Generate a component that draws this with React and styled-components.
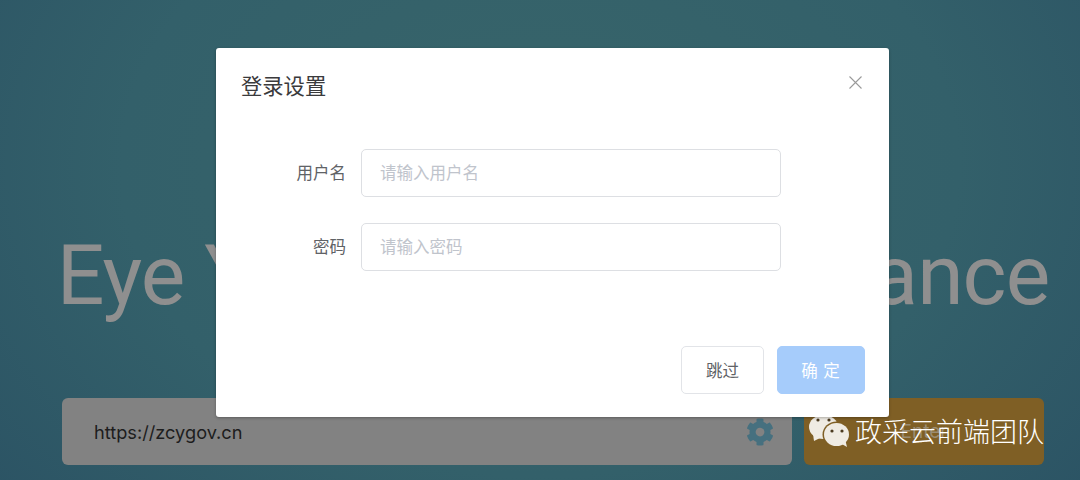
import styled, { createGlobalStyle } from 'styled-components';
import { FaCog } from 'react-icons/fa';

const cjk = '"Noto Sans CJK SC", "Liberation Sans", sans-serif';

const GlobalStyle = createGlobalStyle`
  html, body {
    margin: 0;
    padding: 0;
  }
  * {
    box-sizing: border-box;
  }
`;

const WeChatLogo = () => (
  <svg width="46" height="46" viewBox="0 0 46 46">
    <ellipse cx="16.5" cy="19" rx="14.5" ry="12" fill="#efebe3" />
    <path d="M6 26 L7 33 L15 29 Z" fill="#efebe3" />
    <circle cx="11" cy="12" r="1.6" fill="#4a3a20" />
    <circle cx="22" cy="12" r="1.6" fill="#4a3a20" />
    <ellipse cx="29.5" cy="26.5" rx="14" ry="13" fill="#7f5f25" />
    <ellipse cx="29.5" cy="26.5" rx="12.5" ry="11.5" fill="#efebe3" />
    <path d="M33 35 L40 39 L38 31 Z" fill="#efebe3" />
    <circle cx="25" cy="23" r="1.6" fill="#4a3a20" />
    <circle cx="35" cy="23" r="1.6" fill="#4a3a20" />
  </svg>
);

const App = () => {
  return (
    <Page>
      <GlobalStyle />
      <Title>Eye Your Web Performance</Title>
      <SearchRow>
        <UrlBox>
          <UrlText>https://zcygov.cn</UrlText>
          <SettingsIcon />
        </UrlBox>
        <GoButton>
          Enter
          <Watermark>
            <WeChatLogo />
            <WatermarkText>政采云前端团队</WatermarkText>
          </Watermark>
        </GoButton>
      </SearchRow>

      <Overlay>
        <Modal>
          <ModalHeader>
            <ModalTitle>登录设置</ModalTitle>
            <CloseButton aria-label="关闭">
              <svg width="13" height="13" viewBox="0 0 13 13">
                <path d="M0.5 0.5 L12.5 12.5 M12.5 0.5 L0.5 12.5" stroke="#9a9a9a" strokeWidth="1.1" fill="none" />
              </svg>
            </CloseButton>
          </ModalHeader>
          <Form>
            <Field>
              <Label>用户名</Label>
              <Input placeholder="请输入用户名" />
            </Field>
            <Field>
              <Label>密码</Label>
              <Input placeholder="请输入密码" />
            </Field>
          </Form>
          <Footer>
            <Button>跳过</Button>
            <Button primary>确 定</Button>
          </Footer>
        </Modal>
      </Overlay>
    </Page>
  );
};

const Page = styled.div`
  position: relative;
  width: 1080px;
  height: 480px;
  overflow: hidden;
  display: flex;
  flex-direction: column;
  background: radial-gradient(ellipse 760px 560px at 50% 35%, #38656a 0%, #33606a 55%, #2a5163 100%);
`;

const Title = styled.h1`
  margin: 226px 0 0;
  padding-left: 26px;
  height: 100px;
  line-height: 100px;
  text-align: center;
  font-family: Roboto, "Liberation Sans", sans-serif;
  font-size: 84px;
  font-weight: 400;
  letter-spacing: -0.9px;
  white-space: nowrap;
  color: #8f8f8f;
`;

const SearchRow = styled.div`
  display: flex;
  gap: 12px;
  height: 67px;
  margin: 72px 0 0 62px;
`;

const UrlBox = styled.div`
  flex: 0 0 730px;
  display: flex;
  align-items: center;
  justify-content: space-between;
  padding: 0 18px 0 32px;
  border-radius: 6px;
  background: #828282;
`;

const UrlText = styled.span`
  padding-top: 1px;
  font-family: Inter, "Liberation Sans", sans-serif;
  font-size: 18.2px;
  color: #1d1d1d;
`;

const SettingsIcon = styled(FaCog)`
  width: 28px;
  height: 28px;
  color: #46707f;
`;

const GoButton = styled.div`
  position: relative;
  flex: 0 0 240px;
  display: flex;
  align-items: center;
  justify-content: center;
  border-radius: 6px;
  background: #7f5f25;
  font-family: Inter, "Liberation Sans", sans-serif;
  font-size: 19px;
  color: #9a8c72;
`;

const Watermark = styled.div`
  position: absolute;
  top: 10px;
  left: 3px;
  display: flex;
  align-items: flex-start;
`;

const WatermarkText = styled.span`
  margin: 0 0 0 2px;
  font-family: ${cjk};
  font-size: 27px;
  font-weight: 300;
  line-height: 46px;
  white-space: nowrap;
  color: #ffffff;
`;

const Overlay = styled.div`
  position: absolute;
  inset: 0;
  padding: 48px 0 0 216px;
`;

const Modal = styled.div`
  width: 673px;
  height: 369px;
  display: flex;
  flex-direction: column;
  border-radius: 3px;
  background: #ffffff;
  box-shadow: 0 1px 3px rgba(0, 0, 0, 0.3);
  font-family: ${cjk};
`;

const ModalHeader = styled.div`
  display: flex;
  align-items: flex-start;
  justify-content: space-between;
  height: 101px;
  padding: 21px 27px 0 25px;
`;

const ModalTitle = styled.div`
  font-size: 21.3px;
  line-height: 32px;
  color: #3a3a3c;
`;

const CloseButton = styled.div`
  display: flex;
  margin-top: 7px;
`;

const Form = styled.div`
  display: flex;
  flex-direction: column;
  gap: 26px;
`;

const Field = styled.div`
  display: flex;
  align-items: center;
  gap: 15px;
`;

const Label = styled.label`
  width: 130px;
  padding-bottom: 2px;
  text-align: right;
  font-size: 16.5px;
  color: #606266;
`;

const Input = styled.input`
  width: 420px;
  height: 48px;
  padding: 0 18px 2px;
  border: 1px solid #dddfe3;
  border-radius: 5px;
  outline: none;
  font-family: ${cjk};
  font-size: 16.5px;
  &::placeholder {
    color: #c0c4cc;
    opacity: 1;
  }
`;

const Footer = styled.div`
  display: flex;
  justify-content: flex-end;
  gap: 13px;
  margin-top: auto;
  padding: 0 24px 23px 0;
`;

const Button = styled.button`
  width: ${(p) => (p.primary ? '88px' : '83px')};
  height: 48px;
  padding: 0;
  border: 1px solid ${(p) => (p.primary ? '#a6ccfb' : '#e2e4e8')};
  border-radius: 5px;
  background: ${(p) => (p.primary ? '#a6ccfb' : '#ffffff')};
  color: ${(p) => (p.primary ? '#ffffff' : '#606266')};
  font-family: ${cjk};
  font-size: 16.5px;
  letter-spacing: ${(p) => (p.primary ? '1px' : '0')};
`;

export default App;
